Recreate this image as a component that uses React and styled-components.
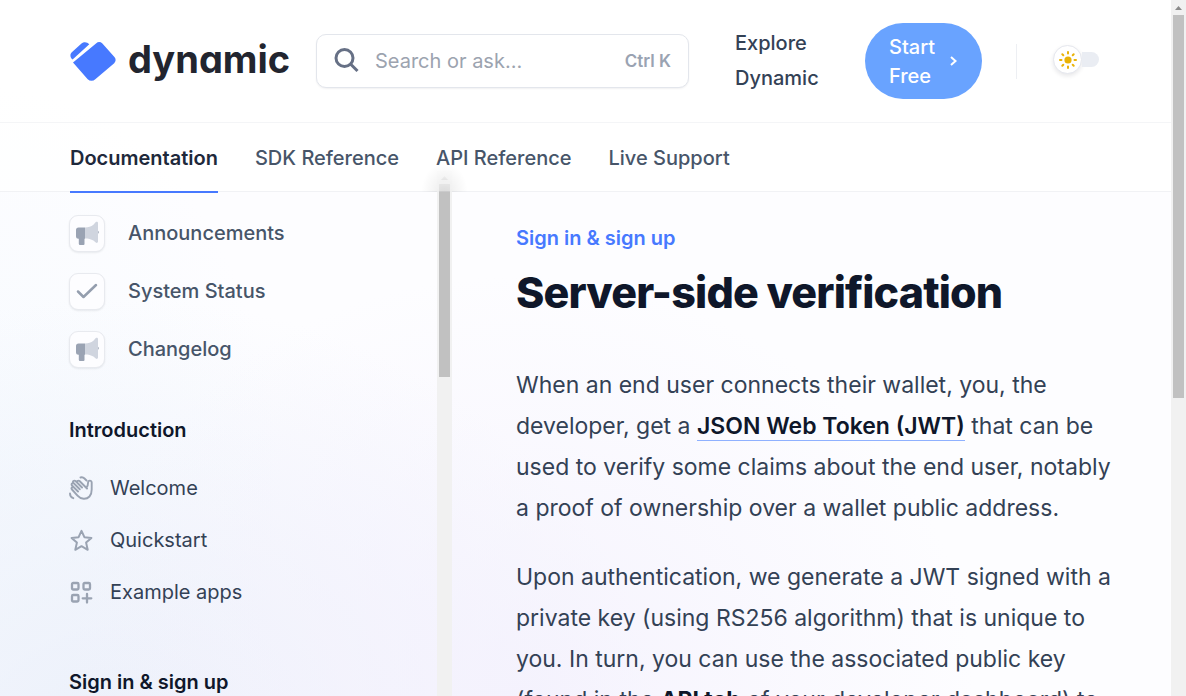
import React from 'react';
import styled, { createGlobalStyle } from 'styled-components';

const Global = createGlobalStyle`
  * { box-sizing: border-box; }
  body { margin: 0; font-family: Inter, "Liberation Sans", sans-serif; color: #334155; overflow: hidden; }
  a { color: inherit; text-decoration: none; }
  p, h1, h2, ul { margin: 0; padding: 0; }
  ul { list-style: none; }
`;

const Shell = styled.div`
  display: flex;
  height: 100vh;
  overflow: hidden;
`;

const Page = styled.div`
  flex: 1;
  min-width: 0;
  display: flex;
  flex-direction: column;
  background:
    radial-gradient(ellipse 460px 420px at 44% 100%, rgba(243, 240, 253, 0.8), rgba(243, 240, 253, 0)),
    radial-gradient(ellipse 540px 440px at 10% 106%, rgba(234, 239, 250, 0.9), rgba(234, 239, 250, 0)),
    radial-gradient(ellipse 280px 400px at 0% 70%, rgba(244, 249, 254, 0.7), rgba(244, 249, 254, 0)),
    #fdfdff;
`;

const Header = styled.header`
  flex: none;
  background: rgba(255, 255, 255, 0.75);
  border-bottom: 1px solid #f1f2f5;
`;

const TopBar = styled.div`
  display: flex;
  align-items: center;
  padding: 23px 72px 23px 70px;
  border-bottom: 1px solid #f4f5f7;
`;

const Logo = styled.a`
  display: flex;
  align-items: center;
  gap: 12px;
  flex: none;
  width: 220px;
  font-size: 38px;
  line-height: 40px;
  font-weight: 700;
  font-feature-settings: "cv11";
  color: #22252f;
  svg { flex: none; }
`;

const Wordmark = styled.span`
  padding-bottom: 4px;
`;

const SearchBox = styled.label`
  flex: 1;
  min-width: 0;
  height: 54px;
  margin-left: 26px;
  display: flex;
  align-items: center;
  gap: 16px;
  padding: 0 17px 1px;
  background: #fff;
  border: 1px solid #e3e6ec;
  border-radius: 10px;
  box-shadow: 0 1px 2px rgba(15, 23, 42, 0.06);
`;

const SearchInput = styled.input`
  flex: 1;
  min-width: 0;
  border: 0;
  padding: 0;
  outline: 0;
  background: transparent;
  font: 400 20px/28px Inter, sans-serif;
  &::placeholder { color: #9ca3af; opacity: 1; }
`;

const Shortcut = styled.span`
  font-size: 17px;
  font-weight: 600;
  color: #9aa3b2;
`;

const ExploreLink = styled.a`
  width: 84px;
  margin-left: 46px;
  font-size: 20px;
  line-height: 35px;
  font-weight: 500;
`;

const StartButton = styled.button`
  flex: none;
  width: 117px;
  height: 76px;
  margin-left: 46px;
  padding: 2px 24px 0;
  display: flex;
  align-items: center;
  justify-content: space-between;
  border: 0;
  border-radius: 38px;
  background: #69a3ff;
  color: #fff;
  font: 500 20px/29px Inter, sans-serif;
  text-align: left;
`;

const Divider = styled.span`
  width: 1px;
  height: 35px;
  margin-left: 34px;
  background: #edeff3;
`;

const ThemeSwitch = styled.button`
  flex: none;
  display: flex;
  align-items: center;
  width: 46px;
  height: 32px;
  margin-left: 36px;
  padding: 0 0 3px;
  border: 0;
  background: none;
  &::after {
    content: "";
    width: 17px;
    height: 15px;
    border-radius: 0 8px 8px 0;
    background: #eaedf3;
  }
`;

const Knob = styled.span`
  display: flex;
  align-items: center;
  justify-content: center;
  width: 29px;
  height: 29px;
  border: 1px solid #e5e7ee;
  border-radius: 50%;
  background: #fff;
  box-shadow: 0 2px 4px rgba(15, 23, 42, 0.1);
`;

const Tabs = styled.nav`
  display: flex;
  gap: 37px;
  padding: 0 70px;
  height: 68px;
`;

const Tab = styled.a`
  position: relative;
  z-index: 1;
  height: 70px;
  padding-top: 21px;
  font-size: 20px;
  line-height: 28px;
  font-weight: ${(p) => (p.$active ? 600 : 500)};
  color: ${(p) => (p.$active ? '#1e293b' : '#475569')};
  border-bottom: 2px solid ${(p) => (p.$active ? '#4779ff' : 'transparent')};
`;

const Columns = styled.div`
  flex: 1;
  min-height: 0;
  display: flex;
`;

const Sidebar = styled.aside`
  flex: none;
  width: 437px;
  padding: 22px 40px 0 69px;
  overflow: hidden;
`;

const Shortcuts = styled.ul`
  display: grid;
  gap: 20px;
`;

const ShortcutLink = styled.a`
  display: flex;
  align-items: center;
  gap: 23px;
  height: 38px;
  font-size: 20px;
  font-weight: 500;
  color: #475569;
`;

const IconTile = styled.span`
  display: flex;
  align-items: center;
  justify-content: center;
  width: 36px;
  height: 37px;
  border: 1px solid #e8eaef;
  border-radius: 9px;
  background: #fdfdff;
  box-shadow: 0 1px 2px rgba(15, 23, 42, 0.08);
`;

const GroupTitle = styled.h2`
  margin-top: ${(p) => (p.$first ? 48 : 50)}px;
  font-size: 20px;
  line-height: 28px;
  font-weight: 600;
  color: #0f172a;
`;

const PageList = styled.ul`
  margin-top: 18px;
`;

const PageLink = styled.a`
  display: flex;
  align-items: center;
  gap: 17px;
  height: 52px;
  font-size: 20px;
`;

const ScrollSlot = styled.div`
  position: relative;
  flex: none;
  display: flex;
  margin-top: -23px;
  &::before {
    content: "";
    position: absolute;
    top: -6px;
    left: -16px;
    right: -16px;
    height: 29px;
    background: radial-gradient(ellipse at 50% 100%, rgba(0, 0, 0, 0.08), transparent 70%);
  }
`;

const ScrollTrack = styled.div`
  position: relative;
  flex: none;
  display: flex;
  justify-content: center;
  width: 15px;
  padding-top: 15px;
  background: #f1f1f1;
  ${(p) => p.$inner && 'mask-image: linear-gradient(transparent, rgba(0, 0, 0, 0.35) 22px, #000 23px);'}
`;

const ScrollThumb = styled.div`
  width: 11px;
  height: ${(p) => (p.$inner ? 193 : 383)}px;
  background: #c1c1c1;
`;

const ScrollArrow = styled.svg`
  position: absolute;
  top: ${(p) => (p.$inner ? 7 : 6)}px;
  left: 4px;
`;

const Article = styled.main`
  flex: 1;
  min-width: 0;
  padding: 32px 52px 0 64px;
  overflow: hidden;
`;

const Eyebrow = styled.p`
  font-size: 20px;
  line-height: 29px;
  font-weight: 600;
  color: #4779ff;
`;

const Title = styled.h1`
  margin-top: 13px;
  font-size: 43px;
  line-height: 52px;
  font-weight: 800;
  letter-spacing: -0.02em;
  color: #0f172a;
`;

const Paragraph = styled.p`
  margin-top: ${(p) => (p.$first ? 47 : 28)}px;
  font-size: 23px;
  line-height: 41px;
`;

const TextLink = styled.a`
  font-weight: 600;
  color: #0f172a;
  border-bottom: 1px solid #8fb1ff;
`;

const Strong = styled.strong`
  font-weight: 700;
  color: #0f172a;
`;

const LogoMark = () => (
  <svg width="46" height="40" viewBox="0 0 46 40" fill="#4779ff" aria-hidden="true">
    <path d="M26 2.4a4.8 4.8 0 0 1 6.4 0l11.800 13.400a4.800 4.800 0 0 1 0 6.400L25.300 38.200a5.500 5.500 0 0 1-7.600 0L3 21.600Z" />
    <path d="M11.500 2.600c2.400-2.200 5.700-1.600 7.800.6L2.600 18.600C.3 16.800-.5 13.600 1.800 11.300Z" />
  </svg>
);

const SearchIcon = () => (
  <svg width="25" height="25" viewBox="0 0 25 25" fill="none" stroke="#667085" strokeWidth="3" aria-hidden="true">
    <circle cx="10.500" cy="10" r="8.500" />
    <path d="M16.500 16l7 7" />
  </svg>
);

const Sun = () => (
  <svg width="20" height="20" viewBox="0 0 20 20" fill="#eab308" stroke="#eab308" strokeWidth="2" strokeLinecap="round" aria-hidden="true">
    <circle cx="10" cy="10" r="2.600" />
    <path d="M10 2v1.500M10 16.500V18M2 10h1.500M16.500 10H18M4.300 4.300l1 1M14.700 14.700l1 1M4.300 15.700l1-1M14.700 5.300l1-1" />
  </svg>
);

const Megaphone = () => (
  <svg width="24" height="24" viewBox="0 0 24 24" aria-hidden="true">
    <path fill="#9aa3b3" d="M22 9c.9.500 1.800 1.300 1.800 2.300s-.9 1.800-1.800 2.300ZM10 6.500v11.200H9.500v5.300a1 1 0 0 1-1 1H5a1.200 1.200 0 0 1-1.200-1.200v-5.100H3.500A2.500 2.500 0 0 1 1 15.200V9A2.500 2.500 0 0 1 3.500 6.500Z" />
    <path fill="#d0d5df" d="M23 2v18.500c0 1.200-1.300 1.900-2.200 1.100l-2.400-2c-2.300-1.500-5-2.100-8.400-2.100v-11c3.400 0 6.100-.9 8.400-2.700L20.800 1.100c.9-.9 2.200-.3 2.200.9Z" />
  </svg>
);

const Check = () => (
  <svg width="22" height="18" viewBox="0 0 22 18" fill="none" stroke="#949eae" strokeWidth="2.500" strokeLinecap="round" strokeLinejoin="round" aria-hidden="true">
    <path d="M2 9.500l5.500 5.500L20 3" />
  </svg>
);

const lineIcon = { width: 24, height: 24, viewBox: '0 0 24 24', fill: 'none', stroke: '#9aa3b2', strokeWidth: 2, strokeLinecap: 'round', strokeLinejoin: 'round', 'aria-hidden': true };

const Wave = () => (
  <svg {...lineIcon} strokeWidth="1.900">
    <path d="M18 12.500l-7.500-7.500a1.400 1.400 0 0 0-2 2l4.500 4.500M12.800 11.200L6.500 5a1.400 1.400 0 0 0-2 2l6.300 6.300M10.500 13L5 7.500a1.400 1.400 0 0 0-2 2l6 6M9 15.500L5 11.500a1.400 1.400 0 0 0-2 2l5.500 6.200c3.500 4 9 4 12 .800 2-2.200 2.200-4.500 2.200-7V6.600c0-2.600-3.600-2.600-3.600 0 0 2-.4 3.500-1.600 4.900M11.500 1.500c1.500-.5 3 0 4 1l2 2M1 17.500c0 2.300 1.200 4 3.300 4.700" />
  </svg>
);

const Star = () => (
  <svg {...lineIcon}>
    <path d="M12.500 2.800l2.900 6.400 7 .7-5.300 4.700 1.600 7.200-6.200-3.600-6.200 3.600 1.600-7.200-5.300-4.700 7-.7Z" />
  </svg>
);

const Apps = () => (
  <svg {...lineIcon} strokeWidth="2.300">
    <rect x="3" y="3" width="6.500" height="6.500" rx="1.200" />
    <rect x="14.500" y="3" width="6.500" height="6.500" rx="1.200" />
    <rect x="3" y="15" width="6.500" height="6.500" rx="1.200" />
    <path d="M18 14v8.500M13.700 18.300h8.600" />
  </svg>
);

const ArrowShape = ({ $inner }) => (
  <ScrollArrow $inner={$inner} width="7" height="4" viewBox="0 0 7 4"><path d="M0 4L3.500 0L7 4Z" fill={$inner ? '#a3a3a3' : '#8a8a8a'} /></ScrollArrow>
);

const shortcuts = [['Announcements', Megaphone], ['System Status', Check], ['Changelog', Megaphone]];
const pages = [['Welcome', Wave], ['Quickstart', Star], ['Example apps', Apps]];

export default function App() {
  return (
    <Shell>
      <Global />
      <Page>
        <Header>
          <TopBar>
            <Logo href="#"><LogoMark /><Wordmark>dynamic</Wordmark></Logo>
            <SearchBox>
              <SearchIcon />
              <SearchInput type="search" aria-label="Search" placeholder="Search or ask..." />
              <Shortcut>Ctrl K</Shortcut>
            </SearchBox>
            <ExploreLink href="#">Explore Dynamic</ExploreLink>
            <StartButton type="button">
              <span>Start<br />Free</span>
              <svg width="9" height="12" viewBox="0 0 9 12" fill="none" stroke="#fff" strokeWidth="2" aria-hidden="true"><path d="M2 1l4.500 4L2 9" /></svg>
            </StartButton>
            <Divider />
            <ThemeSwitch type="button" aria-label="Toggle dark mode"><Knob><Sun /></Knob></ThemeSwitch>
          </TopBar>
          <Tabs>
            <Tab href="#" $active>Documentation</Tab>
            <Tab href="#">SDK Reference</Tab>
            <Tab href="#">API Reference</Tab>
            <Tab href="#">Live Support</Tab>
          </Tabs>
        </Header>
        <Columns>
          <Sidebar>
            <Shortcuts>
              {shortcuts.map(([name, Icon]) => (
                <li key={name}><ShortcutLink href="#"><IconTile><Icon /></IconTile>{name}</ShortcutLink></li>
              ))}
            </Shortcuts>
            <GroupTitle $first>Introduction</GroupTitle>
            <PageList>
              {pages.map(([name, Icon]) => (
                <li key={name}><PageLink href="#"><Icon />{name}</PageLink></li>
              ))}
            </PageList>
            <GroupTitle>Sign in &amp; sign up</GroupTitle>
          </Sidebar>
          <ScrollSlot aria-hidden="true">
            <ScrollTrack $inner>
              <ArrowShape $inner />
              <ScrollThumb $inner />
            </ScrollTrack>
          </ScrollSlot>
          <Article>
            <Eyebrow>Sign in &amp; sign up</Eyebrow>
            <Title>Server-side verification</Title>
            <Paragraph $first>
              When an end user connects their wallet, you, the developer, get a <TextLink href="#">JSON Web Token (JWT)</TextLink> that can be used to verify some claims about the end user, notably a proof of ownership over a wallet public address.
            </Paragraph>
            <Paragraph>
              Upon authentication, we generate a JWT signed with a private key (using RS256 algorithm) that is unique to you. In turn, you can use the associated public key (found in the <Strong>API tab</Strong> of your developer dashboard) to
            </Paragraph>
          </Article>
        </Columns>
      </Page>
      <ScrollTrack aria-hidden="true">
        <ArrowShape />
        <ScrollThumb />
      </ScrollTrack>
    </Shell>
  );
}
